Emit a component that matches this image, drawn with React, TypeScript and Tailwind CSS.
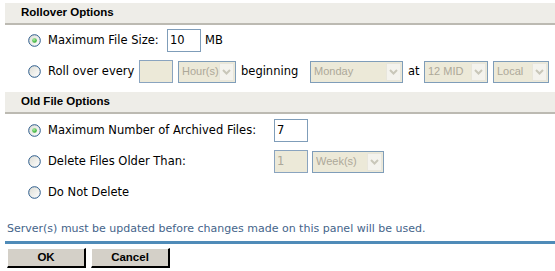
import React from "react";

function Radio({ checked }: { checked?: boolean }) {
  return (
    <svg width="13" height="13" viewBox="0 0 13 13" className="shrink-0">
      <defs>
        <linearGradient id="rbg" x1="0" y1="0" x2="1" y2="1">
          <stop offset="0" stopColor="#dcdcd4" />
          <stop offset="1" stopColor="#ffffff" />
        </linearGradient>
        <radialGradient id="dot" cx="0.4" cy="0.35" r="0.7">
          <stop offset="0" stopColor="#a8f0a0" />
          <stop offset="1" stopColor="#21a121" />
        </radialGradient>
      </defs>
      <circle cx="6.5" cy="6.5" r="5.8" fill="url(#rbg)" stroke="#2a5a8a" strokeWidth="1" />
      {checked && <circle cx="6.5" cy="6.5" r="2.3" fill="url(#dot)" />}
    </svg>
  );
}

function Select({ label, w }: { label: string; w: string }) {
  return (
    <div className={`${w} h-[22px] flex items-center border border-[#7f9db9] bg-[#ece9d8] pl-[3px] pr-[1px]`}>
      <span
        className="flex-1 text-[11px] text-[#aca899] whitespace-nowrap overflow-hidden"
        style={{ fontFamily: '"Liberation Sans", Arial, sans-serif' }}
      >
        {label}
      </span>
      <span className="w-[15px] h-[18px] shrink-0 flex items-center justify-center bg-[#f4f3ee] border border-[#e8e6dc]">
        <svg width="9" height="6" viewBox="0 0 9 6">
          <path d="M1 1 L4.5 4.5 L8 1" fill="none" stroke="#c9c7ba" strokeWidth="2" />
        </svg>
      </span>
    </div>
  );
}

function TextBox({ value, disabled }: { value: string; disabled?: boolean }) {
  return (
    <div
      className={
        disabled
          ? "w-[34px] h-[23px] border border-[#8aa4bf] bg-[#ece9d8] text-[#aca899] px-[2px] leading-[21px]"
          : "w-[34px] h-[23px] border border-[#7f9db9] bg-white text-black px-[2px] leading-[21px]"
      }
    >
      {value}
    </div>
  );
}

function SectionHeader({ title }: { title: string }) {
  return (
    <div className="ml-[5px] h-[22px] bg-[#eeede8] border-b-2 border-[#bcbab2] pl-[16px] flex items-center">
      <span className="font-bold text-[11.5px] text-black" style={{ fontFamily: '"Liberation Sans", Arial, sans-serif' }}>
        {title}
      </span>
    </div>
  );
}

export default function App() {
  return (
    <div className="w-[555px] h-[271px] bg-white overflow-hidden text-[11.5px] text-black pt-[3px]" style={{ fontFamily: '"DejaVu Sans", Verdana, sans-serif' }}>
      <SectionHeader title="Rollover Options" />

      <div className="flex flex-col gap-[8px] pt-[4px] pl-[28px]">
        <div className="flex items-center h-[23px]">
          <Radio checked />
          <span className="ml-[7px] w-[119px]">Maximum File Size:</span>
          <TextBox value="10" />
          <span className="ml-[4px]">MB</span>
        </div>
        <div className="flex items-center h-[23px]">
          <Radio />
          <span className="ml-[7px] w-[91px]">Roll over every</span>
          <TextBox value="" disabled />
          <div className="ml-[5px]">
            <Select label="Hour(s)" w="w-[58px]" />
          </div>
          <span className="ml-[5px] w-[69px]">beginning</span>
          <Select label="Monday" w="w-[93px]" />
          <span className="ml-[5px] w-[16px]">at</span>
          <Select label="12 MID" w="w-[64px]" />
          <div className="ml-[5px]">
            <Select label="Local" w="w-[56px]" />
          </div>
        </div>
      </div>

      <div className="mt-[9px]">
        <SectionHeader title="Old File Options" />
      </div>

      <div className="flex flex-col gap-[8px] pt-[5px] pl-[28px]">
        <div className="flex items-center h-[23px]">
          <Radio checked />
          <span className="ml-[7px] w-[226px]">Maximum Number of Archived Files:</span>
          <TextBox value="7" />
        </div>
        <div className="flex items-center h-[23px]">
          <Radio />
          <span className="ml-[7px] w-[226px]">Delete Files Older Than:</span>
          <TextBox value="1" disabled />
          <div className="ml-[4px]">
            <Select label="Week(s)" w="w-[72px]" />
          </div>
        </div>
        <div className="flex items-center h-[23px]">
          <Radio />
          <span className="ml-[7px]">Do Not Delete</span>
        </div>
      </div>

      <div className="mt-[18px] pl-[7px] h-[14px] leading-[14px] text-[11px] text-[#45648a]">
        Server(s) must be updated before changes made on this panel will be used.
      </div>

      <div className="mt-[5px] ml-[5px] h-[3px] bg-[#4f8bb8]" />

      <div className="mt-[4px] ml-[7px] flex gap-[5px]">
        <button className="w-[79px] h-[20px] bg-[#d4d0c8] border-t border-l border-t-white border-l-white border-r-2 border-b-2 border-r-black border-b-black font-bold text-[11.5px] leading-none" style={{ fontFamily: '"Liberation Sans", Arial, sans-serif' }}>
          OK
        </button>
        <button className="w-[79px] h-[20px] bg-[#d4d0c8] border-t border-l border-t-white border-l-white border-r-2 border-b-2 border-r-black border-b-black font-bold text-[11.5px] leading-none" style={{ fontFamily: '"Liberation Sans", Arial, sans-serif' }}>
          Cancel
        </button>
      </div>
    </div>
  );
}
